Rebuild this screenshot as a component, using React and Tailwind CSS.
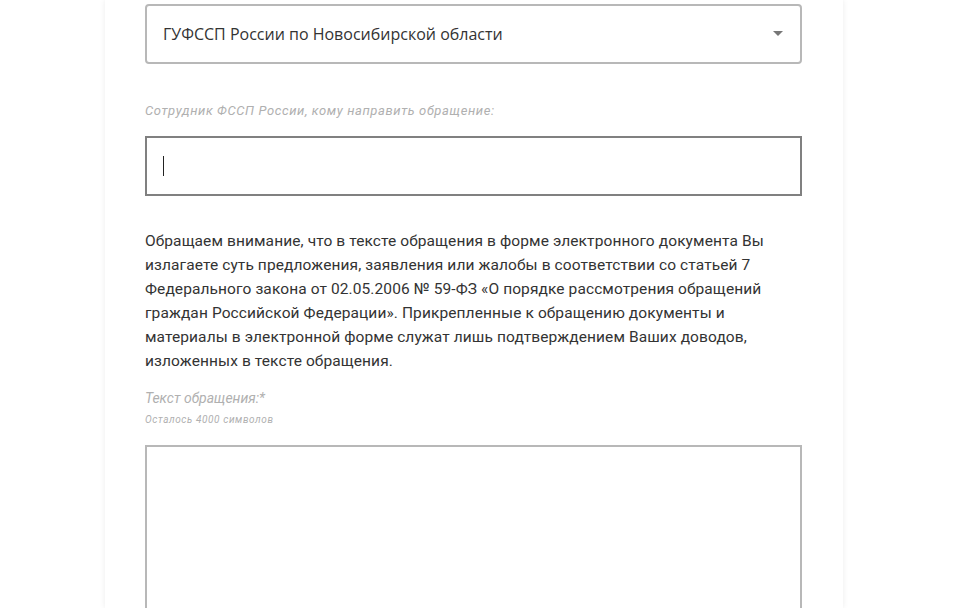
import React from 'react';

const font = { fontFamily: 'Roboto, "Noto Sans", sans-serif' };

const lines = [
  'Обращаем внимание, что в тексте обращения в форме электронного документа Вы',
  'излагаете суть предложения, заявления или жалобы в соответствии со статьей 7',
  'Федерального закона от 02.05.2006 № 59-ФЗ «О порядке рассмотрения обращений',
  'граждан Российской Федерации». Прикрепленные к обращению документы и',
  'материалы в электронной форме служат лишь подтверждением Ваших доводов,',
  'изложенных в тексте обращения.',
];

const App = () => {
  return (
    <div className="h-[608px] w-full overflow-hidden bg-white" style={font}>
      <div className="ml-[105px] h-full w-[738px] bg-white px-[40px] shadow-[0_0_6px_rgba(0,0,0,0.08)]">
        {/* select */}
        <div className="pt-[4px]">
          <div className="flex h-[60px] w-[657px] items-center justify-between rounded-[4px] border-2 border-[#b8b8b8] pl-[16px] pr-[16px]">
            <span className="text-[16px] text-[#333]" style={{ fontFamily: '"Open Sans", sans-serif' }}>
              ГУФССП России по Новосибирской области
            </span>
            <svg width="10" height="6" viewBox="0 0 10 6" className="mr-[1px]">
              <path d="M0 0 L10 0 L5 5 Z" fill="#777" />
            </svg>
          </div>
        </div>

        {/* employee */}
        <div className="mt-[39px] text-[13px] italic leading-[16px] tracking-[0.6px] text-[#b0b0b0]">
          Сотрудник ФССП России, кому направить обращение:
        </div>
        <div className="mt-[17px] flex h-[60px] w-[657px] items-center border-2 border-[#808080] pl-[16px]">
          <div className="h-[20px] w-[1px] bg-[#222]" />
        </div>

        {/* notice */}
        <p className="mt-[33px] w-[680px] text-[15.5px] leading-[24px] tracking-[0.1px] text-[#333]">
          {lines.map((l, i) => (
            <React.Fragment key={i}>
              {l}
              {i < lines.length - 1 && <br />}
            </React.Fragment>
          ))}
        </p>

        {/* text */}
        <div className="mt-[16px] text-[14px] italic leading-[18px] text-[#b0b0b0]">Текст обращения:*</div>
        <div className="mt-[7px] text-[10px] italic leading-[12px] tracking-[0.6px] text-[#b0b0b0]">
          Осталось 4000 символов
        </div>
        <div className="mt-[19px] h-[200px] w-[657px] border-2 border-[#b8b8b8]" />
      </div>
    </div>
  );
};

export default App;
